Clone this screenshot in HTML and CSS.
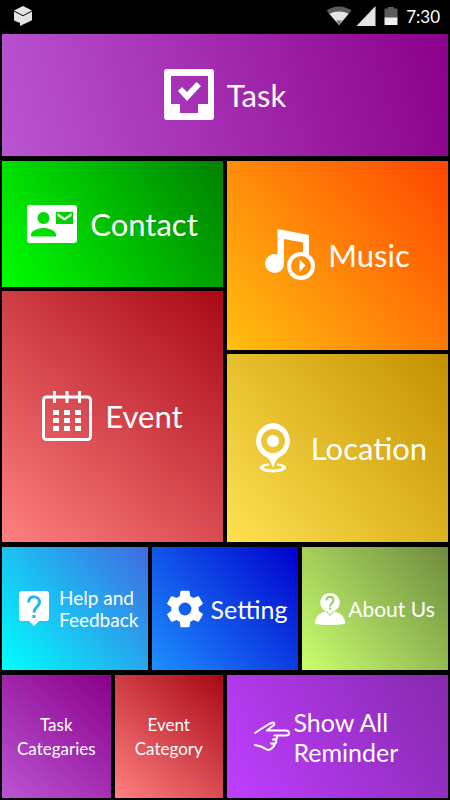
FILE: index.html
```html
<!DOCTYPE html>
<html lang="en">

<head>
  <meta charset="UTF-8">
  <meta name="viewport" content="width=device-width, initial-scale=1.0">
  <title>Reminder</title>
  <link rel="stylesheet" href="styles.css">
</head>

<body>

  <header class="status-bar">
    <svg class="status-app" width="18" height="20" viewBox="0 0 18 20">
      <path fill="#e4e4e4" d="M9 0l9 4.500L9 9.200 0 4.500z" />
      <path fill="#e4e4e4" d="M0 5.500L9 10.200l9-4.700v8.700L6 20v-3L0 14.500z" />
    </svg>
    <svg width="26" height="20" viewBox="0 0 26 20">
      <path fill="#5c5c5c" d="M13 19L.5 4.500Q13-3.500 25.500 4.500z" />
      <path fill="#e4e4e4" d="M13 19L3.300 7.800Q13 3 22.700 7.800z" />
      <path fill="#777" d="M13 19l-2.600-4.500h5.200z" />
    </svg>
    <svg width="20" height="20" viewBox="0 0 20 20">
      <path fill="#e4e4e4" d="M19.500 0v20H.5z" />
    </svg>
    <svg class="battery" width="14" height="20" viewBox="0 0 14 20">
      <path fill="#5c5c5c" d="M.5 2.500H4V1h6v1.500h3.500V12H.5z" />
      <path fill="#efefef" d="M.5 11.500h13V19H.5z" />
    </svg>
    <span class="clock">7:30</span>
  </header>

  <main class="tiles">
    <button class="tile task">
      <svg width="50" height="52" viewBox="0 0 50 52">
        <path fill="#fff" fill-rule="evenodd" d="M3 0h44q3 0 3 3v45q0 3-3 3H3q-3 0-3-3V3q0-3 3-3zM7 7v28h9v9h18v-9h10V7z" />
        <path fill="#fff" d="M14 22l4-4 5 5 9.500-10 4.500 4L23 32z" />
      </svg>
      <span>Task</span>
    </button>

    <div class="middle">
      <div class="column">
        <button class="tile contact">
          <svg width="50" height="38" viewBox="0 0 50 38">
            <path fill="#fff" fill-rule="evenodd" d="M3 0h44q3 0 3 3v32q0 3-3 3H3q-3 0-3-3V3q0-3 3-3zM16.500 7a6 6 0 1 0 .01 0zM4 31.500h25v-2c0-4-8-6.500-12.500-6.500S4 25.500 4 29.500zM29 7v12h17V7z" />
            <path fill="#fff" d="M30.500 8l7 5 7-5v3l-7 4.500-7-4.500z" />
          </svg>
          <span>Contact</span>
        </button>
        <button class="tile event">
          <svg width="50" height="50" viewBox="0 0 50 50">
            <rect x="1.500" y="6" width="47" height="42.500" rx="3" fill="none" stroke="#fff" stroke-width="3" />
            <path stroke="#fff" stroke-width="3" d="M12.500 0v12M25 0v12M37.500 0v12" />
            <path stroke="#fff" stroke-width="5" stroke-dasharray="6 5" d="M11 21.500h28M11 29.500h28M11 37.500h28" />
          </svg>
          <span>Event</span>
        </button>
      </div>
      <div class="column">
        <button class="tile music">
          <svg width="50" height="52" viewBox="0 0 50 52">
            <path fill="#fff" d="M12.500 0L44 6v19h-6V13.500L19 10v26a9.500 9.500 0 1 1-6.500-10.500z" />
            <circle cx="36" cy="37" r="12" fill="none" stroke="#fff" stroke-width="4" />
            <path fill="#fff" d="M34.500 30.500l6 6-6 6.500z" />
          </svg>
          <span>Music</span>
        </button>
        <button class="tile location">
          <svg width="50" height="50" viewBox="0 0 50 50">
            <path fill="#fff" fill-rule="evenodd" d="M25 0a18 18 0 0 1 6 34.500Q27.500 37 25 45 22.500 37 19 34.500A18 18 0 0 1 25 0zm0 6a12 12 0 1 0 .01 0z" />
            <circle cx="25" cy="18" r="6" fill="#fff" />
            <path fill="#fff" d="M20.500 40.500C15 41 12 42.500 12 44.500c0 6.500 26 6.500 26 0 0-2-3-3.500-8.500-4l-.8 1.800c9 1.200 6 4.200-3.700 4.200s-12.700-3-3.700-4.200z" />
          </svg>
          <span>Location</span>
        </button>
      </div>
    </div>

    <div class="row">
      <button class="tile help">
        <svg width="30" height="36" viewBox="0 0 30 36">
          <path fill="#fff" d="M3 0h24q3 0 3 3v24q0 3-3 3h-7l-5 5-5-5H3q-3 0-3-3V3q0-3 3-3z" />
          <path fill="none" stroke="#20b8f0" stroke-width="3" d="M9.500 11.500c0-8 11-7 11 0 0 4-5.500 4.500-5.500 10" />
          <path fill="#20b8f0" d="M13.500 24h3v3h-3z" />
        </svg>
        <span>Help and Feedback</span>
      </button>
      <button class="tile setting">
        <svg width="44" height="44" viewBox="0 0 24 24">
          <path fill="#fff" d="M19.430 12.980c.04-.32.070-.64.070-.98s-.03-.66-.07-.98l2.110-1.650c.19-.15.240-.42.120-.64l-2-3.460c-.12-.22-.39-.3-.61-.22l-2.490 1c-.52-.4-1.080-.73-1.690-.98l-.38-2.650A.49.490 0 0 0 14 2h-4c-.25 0-.46.180-.49.420l-.38 2.650c-.61.250-1.170.590-1.690.980l-2.490-1c-.23-.09-.49 0-.61.220l-2 3.460c-.13.220-.07.490.120.640l2.110 1.650c-.04.320-.07.650-.07.980s.03.660.070.980l-2.110 1.650c-.19.150-.24.420-.12.640l2 3.460c.12.220.39.300.61.220l2.490-1c.52.400 1.080.730 1.690.980l.38 2.650c.03.240.24.420.49.420h4c.25 0 .46-.18.490-.42l.38-2.650c.61-.25 1.170-.59 1.690-.98l2.490 1c.23.090.49 0 .61-.22l2-3.460c.12-.22.070-.49-.12-.64zM12 15.500a3.500 3.500 0 1 1 0-7 3.500 3.500 0 0 1 0 7z" />
        </svg>
        <span>Setting</span>
      </button>
      <button class="tile about">
        <svg width="30" height="32" viewBox="0 0 30 32">
          <path fill="#fff" d="M0 31c0-7 3-10 9-12l3-1 3 4 3-4 3 1c6 2 9 5 9 12q-15 2-30 0z" />
          <path fill="#fff" d="M15 0a9.500 9.500 0 0 1 4.500 18H18l-3 4-3-4h-1.500A9.500 9.500 0 0 1 15 0z" />
          <path fill="none" stroke="#9cca5a" d="M11.500 18.500l3.500 4 3.500-4" />
          <path fill="none" stroke="#9cca5a" stroke-width="2" d="M11.500 7.500c0-5 7-5 7 0 0 3-3.500 2.500-3.500 6" />
          <path fill="#9cca5a" d="M14 14.500h2v2h-2z" />
        </svg>
        <span>About Us</span>
      </button>
    </div>

    <div class="row">
      <div class="row">
        <button class="tile small task-category"><span>Task Categaries</span></button>
        <button class="tile small event-category"><span>Event Category</span></button>
      </div>
      <button class="tile show-all">
        <svg width="36" height="32" viewBox="0 0 36 32">
          <path fill="none" stroke="#fff" stroke-width="2" stroke-linecap="round" stroke-linejoin="round" d="M1 12l6-4 8-5 4-1.500q2 .5 1 2.500l-4 3-3 2.500H32q3 0 3 2.500t-3 2.500H20.500M23 15q1 4-4 3.500 5 0 2.500 4H17q5 0 3 2.500L17 28q-3 2-6-.5l-4-2-6-1.500" />
        </svg>
        <span>Show All Reminder</span>
      </button>
    </div>
  </main>

</body>

</html>
```
FILE: styles.css
```css
* {
  box-sizing: border-box;
}

body {
  margin: 0;
  min-height: 100vh;
  display: flex;
  flex-direction: column;
  background-color: #000;
  color: #fff;
  font-family: Lato, sans-serif;
}

.status-bar {
  display: flex;
  align-items: center;
  gap: 4px;
  height: 34px;
  padding: 0 10px 2px 14px;
}

.status-app {
  margin-right: auto;
}

.battery {
  margin: 0 4px;
}

.clock {
  font-size: 17px;
}

.tiles {
  flex: 1;
  display: flex;
  flex-direction: column;
  gap: 5px;
  padding: 0 2px 2px;
}

.middle,
.row {
  display: flex;
  gap: 4px;
}

.middle {
  flex: 381 0 0;
}

.row {
  flex: 123 0 0;
}

.column {
  flex: 1 1 0;
  display: flex;
  flex-direction: column;
  gap: 4px;
}

.row > * {
  flex: 1 1 0;
}

.tile {
  display: flex;
  align-items: center;
  justify-content: center;
  gap: 13px;
  min-width: 0;
  padding: 0;
  border: 0;
  color: #fff;
  font-family: inherit;
  font-size: 31px;
  cursor: pointer;
}

.tile svg {
  flex: none;
}

/* Gradients run from the bottom left corner to the top right */
.task {
  flex: 122 0 0;
  background: linear-gradient(75deg, #ba55d3, #8b008b);
}

.contact {
  flex: 1 0 0;
  background: linear-gradient(60deg, #00ff00, #008000);
}

.event {
  flex: 2 0 0;
  background: linear-gradient(41deg, #ff8080, #a90816);
}

.music {
  flex: 1 0 0;
  background: linear-gradient(50deg, #ffc010, #ff4500);
}

.location {
  flex: 1 0 0;
  background: linear-gradient(50deg, #ffe250, #c49000);
}

.help {
  gap: 10px;
  background: linear-gradient(50deg, #00ffff, #4169e1);
  font-size: 19px;
  line-height: 22px;
  text-align: left;
}

.help svg {
  margin-left: 8px;
}

.help span {
  width: 80px;
}

.setting {
  gap: 4px;
  background: linear-gradient(50deg, #1e90ff, #0000cd);
  font-size: 25px;
}

.about {
  gap: 3px;
  background: linear-gradient(50deg, #caff70, #6e8b3d);
  font-size: 21px;
}

.small {
  font-size: 17px;
  line-height: 24px;
}

.task-category {
  background: linear-gradient(41deg, #ba55d3, #8b008b);
}

.event-category {
  background: linear-gradient(41deg, #ff8080, #a90816);
}

.show-all {
  gap: 4px;
  background: linear-gradient(61deg, #bf3eff, #8629ad);
  font-size: 25px;
  line-height: 30px;
  text-align: left;
}

.show-all span {
  width: 128px;
}
```
